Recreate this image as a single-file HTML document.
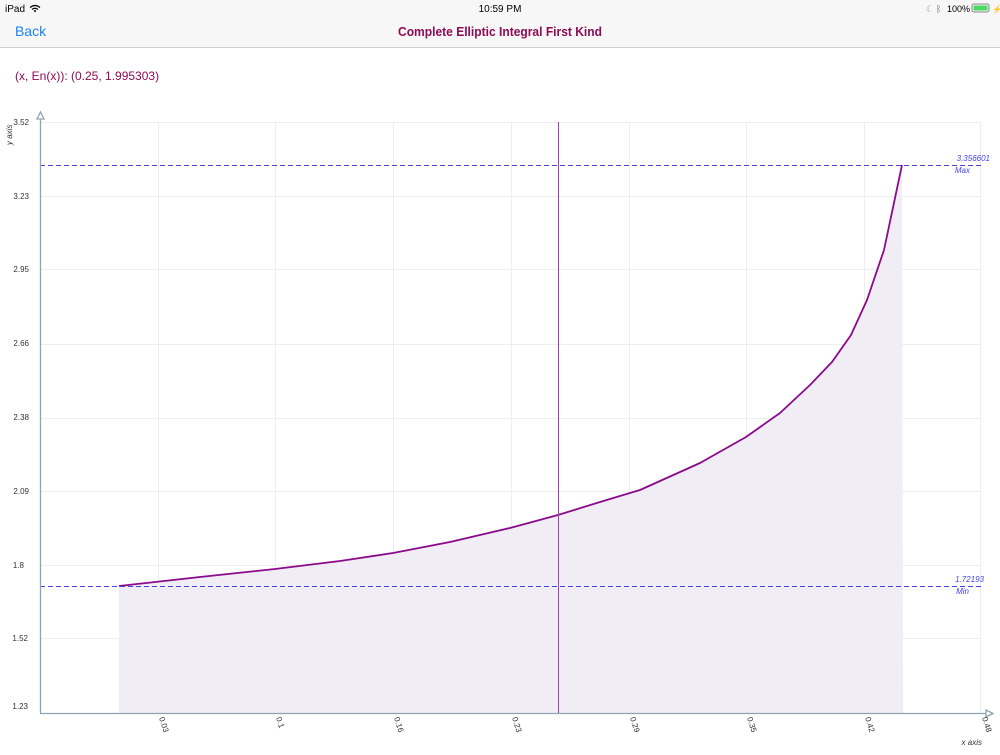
<!DOCTYPE html>
<html><head><meta charset="utf-8"><style>
body{margin:0;width:1000px;height:750px;overflow:hidden;background:#fff;font-family:"Liberation Sans",sans-serif;}
</style></head><body>
<svg width="1000" height="750" xmlns="http://www.w3.org/2000/svg" font-family="Liberation Sans, sans-serif">
<rect x="0" y="0" width="1000" height="47" fill="#f7f7f7"/>
<line x1="0" y1="47.5" x2="1000" y2="47.5" stroke="#d0d0d0"/>
<text x="5" y="12" font-size="10" fill="#000">iPad</text>
<path d="M30 7.5 q5 -4 10 0 M32 9.5 q3 -2.5 6 0" stroke="#000" stroke-width="1.2" fill="none"/><circle cx="35" cy="11" r="1" fill="#000"/>
<text x="500" y="12" font-size="10" fill="#000" text-anchor="middle">10:59 PM</text>
<text x="926" y="12" font-size="9" fill="#999">☾</text>
<text x="936" y="12" font-size="9" fill="#666">ᛒ</text>
<text x="947" y="12" font-size="9" fill="#000">100%</text>
<rect x="972" y="4" width="17" height="8" rx="2" fill="none" stroke="#888"/>
<rect x="973.5" y="5.5" width="14" height="5" fill="#4cd964"/>
<text x="992" y="12" font-size="8" fill="#000">⚡</text>
<text x="15" y="36" font-size="14" fill="#1a82fb">Back</text>
<text x="500" y="36" font-size="12.5" font-weight="bold" fill="#8e0b55" text-anchor="middle" textLength="204" lengthAdjust="spacingAndGlyphs">Complete Elliptic Integral First Kind</text>
<text x="15" y="80" font-size="12" fill="#8e0b55">(x, En(x)): (0.25, 1.995303)</text>
<g stroke="#eeeeee" stroke-width="1">
<line x1="40" y1="122.5" x2="981" y2="122.5"/><line x1="40" y1="196.5" x2="981" y2="196.5"/><line x1="40" y1="269.5" x2="981" y2="269.5"/><line x1="40" y1="344.5" x2="981" y2="344.5"/><line x1="40" y1="418.5" x2="981" y2="418.5"/><line x1="40" y1="491.5" x2="981" y2="491.5"/><line x1="40" y1="565.5" x2="981" y2="565.5"/><line x1="40" y1="638.5" x2="981" y2="638.5"/>
<line x1="158.5" y1="122" x2="158.5" y2="713"/><line x1="275.5" y1="122" x2="275.5" y2="713"/><line x1="393.5" y1="122" x2="393.5" y2="713"/><line x1="511.5" y1="122" x2="511.5" y2="713"/><line x1="629.5" y1="122" x2="629.5" y2="713"/><line x1="746.5" y1="122" x2="746.5" y2="713"/><line x1="864.5" y1="122" x2="864.5" y2="713"/><line x1="980.5" y1="122" x2="980.5" y2="713"/>
</g>
<path d="M119 586 L200 577 L275 569 L340 561 L393 553 L450 542 L510 528 L558 515 L600 502 L640 490 L700 463 L746 437 L780 413 L810 385 L832 362 L851 335 L867 300 L884 250 L902 165 L903 713 L119 713 Z" fill="#f0eef4"/>
<path d="M119 586 L200 577 L275 569 L340 561 L393 553 L450 542 L510 528 L558 515 L600 502 L640 490 L700 463 L746 437 L780 413 L810 385 L832 362 L851 335 L867 300 L884 250 L902 165" fill="none" stroke="#8b0a8b" stroke-width="1.8" stroke-linejoin="round"/>
<line x1="558.5" y1="122" x2="558.5" y2="713" stroke="#a040b0" stroke-width="1"/>
<g stroke-width="1" stroke-dasharray="5,3">
<line x1="40" y1="165.5" x2="981" y2="165.5" stroke="#5540cc"/><line x1="40" y1="586.5" x2="981" y2="586.5" stroke="#4444ee"/>
</g>
<g fill="#4444ee" font-size="8" font-style="italic" text-anchor="end">
<text x="990" y="161">3.356601</text><text x="970" y="173">Max</text>
<text x="984" y="582">1.72193</text><text x="969" y="594">Min</text>
</g>
<g stroke="#8fa3b3" stroke-width="1.3" fill="#fff">
<line x1="40.5" y1="118" x2="40.5" y2="713"/><line x1="40" y1="713.5" x2="988" y2="713.5"/>
<path d="M37 119 L40.5 112 L44 119 Z"/><path d="M986 710 L993 713.5 L986 717 Z"/>
</g>
<g font-size="8" fill="#333" text-anchor="end">
<text x="29" y="125">3.52</text><text x="29" y="199">3.23</text><text x="29" y="272">2.95</text><text x="29" y="346">2.66</text><text x="29" y="420">2.38</text><text x="29" y="494">2.09</text><text x="24" y="568">1.8</text><text x="28" y="641">1.52</text><text x="28" y="709">1.23</text>
</g>
<text transform="translate(12,145) rotate(-90)" font-size="8" font-style="italic" fill="#333">y axis</text>
<g font-size="8" fill="#333">
<text transform="translate(159,718) rotate(72)">0.03</text>
<text transform="translate(276,718) rotate(72)">0.1</text>
<text transform="translate(394,718) rotate(72)">0.16</text>
<text transform="translate(512,718) rotate(72)">0.23</text>
<text transform="translate(630,718) rotate(72)">0.29</text>
<text transform="translate(747,718) rotate(72)">0.35</text>
<text transform="translate(865,718) rotate(72)">0.42</text>
<text transform="translate(982,718) rotate(72)">0.48</text>
</g>
<text x="982" y="745" font-size="8" font-style="italic" fill="#333" text-anchor="end">x axis</text>
</svg>
</body></html>
